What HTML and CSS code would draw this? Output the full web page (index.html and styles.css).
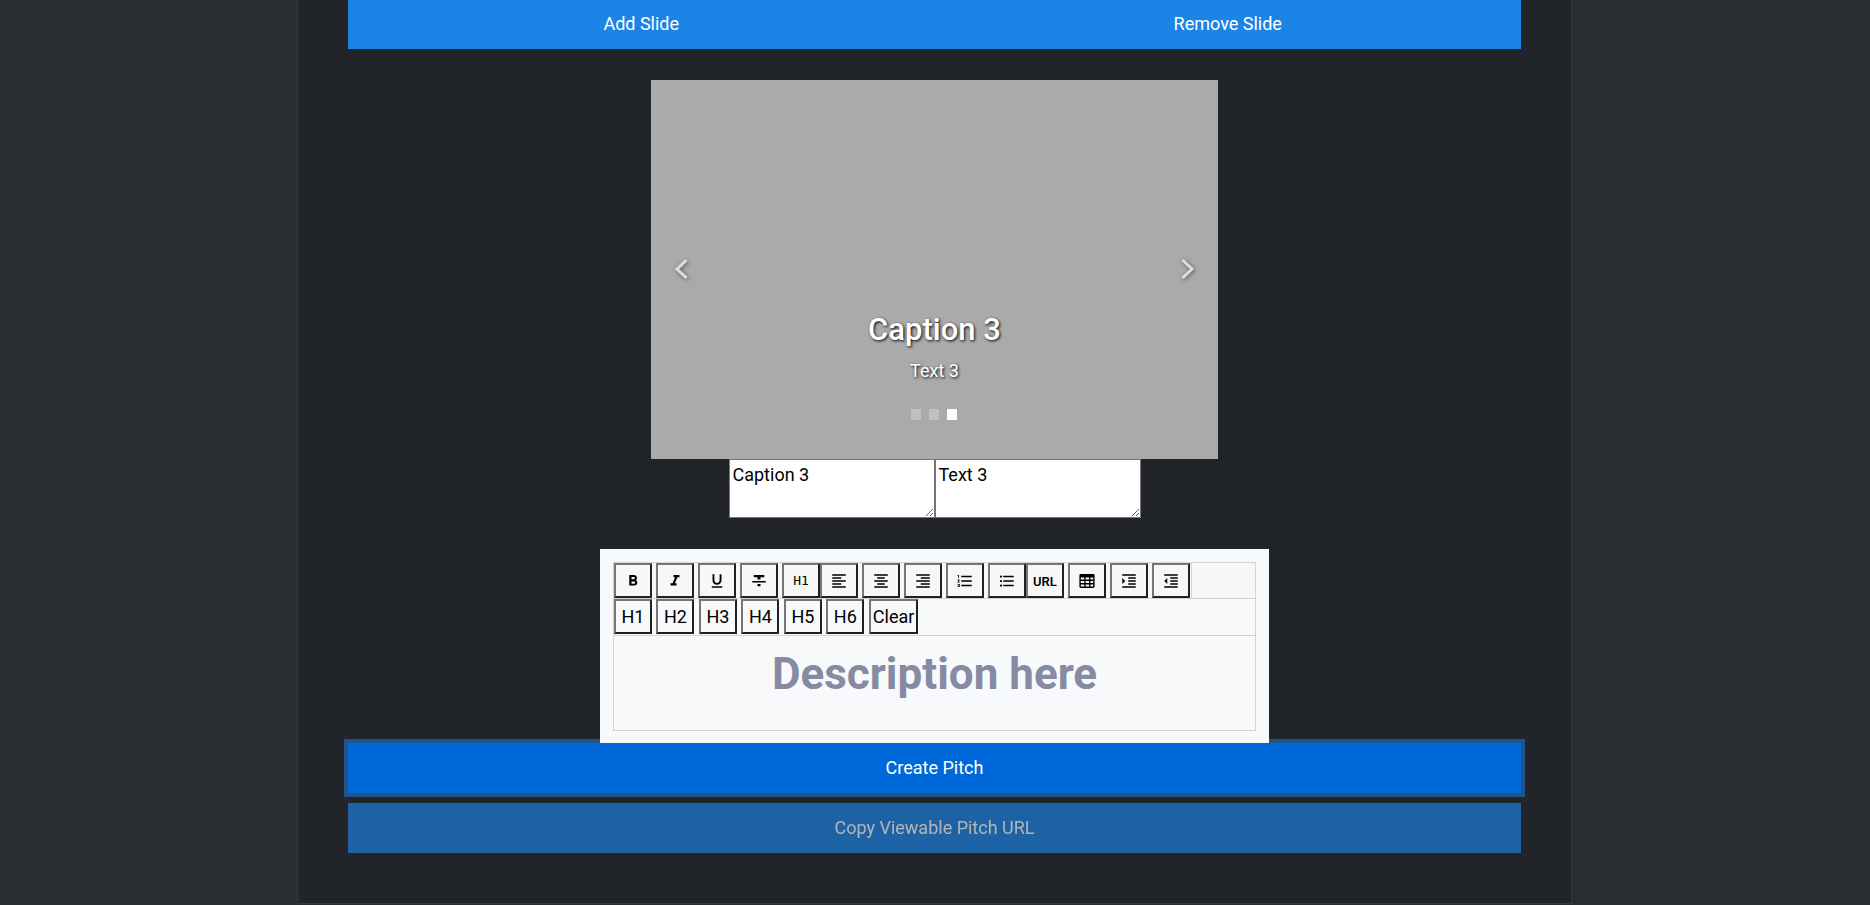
FILE: index.html
```html
<!DOCTYPE html>
<html lang="en">
<head>
<meta charset="utf-8">
<title>Create Pitch</title>
<link rel="stylesheet" href="styles.css">
</head>
<body>
<main class="panel">
  <div class="slide-actions">
    <button class="btn" type="button">Add Slide</button>
    <button class="btn" type="button">Remove Slide</button>
  </div>

  <section class="carousel" aria-label="Slides">
    <button class="arrow" type="button" aria-label="Previous slide">
      <svg viewBox="0 0 20 24" width="20" height="24"><path d="M15.500 2 6 11l9.500 9"/></svg>
    </button>
    <div class="caption">
      <h3 class="caption-title">Caption 3</h3>
      <p class="caption-text">Text 3</p>
      <div class="dots">
        <button class="dot" type="button" aria-label="Slide 1"></button>
        <button class="dot" type="button" aria-label="Slide 2"></button>
        <button class="dot dot-active" type="button" aria-label="Slide 3"></button>
      </div>
    </div>
    <button class="arrow" type="button" aria-label="Next slide">
      <svg viewBox="0 0 20 24" width="20" height="24"><path d="m4.500 2 9.500 9-9.500 9"/></svg>
    </button>
  </section>

  <div class="slide-fields">
    <textarea class="field" aria-label="Slide caption">Caption 3</textarea>
    <textarea class="field" aria-label="Slide text">Text 3</textarea>
  </div>

  <section class="editor" aria-label="Description editor">
    <div class="editor-frame">
      <div class="toolbar">
        <div class="tools">
          <button class="tool" type="button" aria-label="Bold"><svg viewBox="0 0 24 24"><path d="M15.600 10.790c.97-.67 1.650-1.770 1.650-2.790 0-2.260-1.750-4-4-4H7v14h7.040c2.090 0 3.710-1.700 3.710-3.790 0-1.520-.86-2.820-2.150-3.420zM10 6.500h3c.83 0 1.500.67 1.500 1.500s-.67 1.500-1.500 1.500h-3v-3zm3.500 9H10v-3h3.500c.83 0 1.500.67 1.500 1.500s-.67 1.500-1.500 1.500z"/></svg></button>
          <button class="tool" type="button" aria-label="Italic"><svg viewBox="0 0 24 24"><path d="M10 4v3h2.210l-3.420 8H6v3h8v-3h-2.210l3.420-8H18V4z"/></svg></button>
          <button class="tool" type="button" aria-label="Underline"><svg viewBox="0 0 24 24"><path d="M12 17c3.310 0 6-2.690 6-6V3h-2.500v8c0 1.930-1.570 3.500-3.500 3.500S8.500 12.930 8.500 11V3H6v8c0 3.310 2.690 6 6 6zm-7 2v2h14v-2H5z"/></svg></button>
          <button class="tool" type="button" aria-label="Strikethrough"><svg viewBox="0 0 24 24"><path d="M10 19h4v-3h-4v3zM5 4v3h5v3h4V7h5V4H5zM3 14h18v-2H3v2z"/></svg></button>
          <button class="tool tool-h1" type="button">H1</button>
          <button class="tool" type="button" aria-label="Align left"><svg viewBox="0 0 24 24"><path d="M15 15H3v2h12v-2zm0-8H3v2h12V7zM3 13h18v-2H3v2zm0 8h18v-2H3v2zM3 3v2h18V3H3z"/></svg></button>
          <button class="tool" type="button" aria-label="Align center"><svg viewBox="0 0 24 24"><path d="M7 15v2h10v-2H7zm-4 6h18v-2H3v2zm0-8h18v-2H3v2zm4-6v2h10V7H7zM3 3v2h18V3H3z"/></svg></button>
          <button class="tool" type="button" aria-label="Align right"><svg viewBox="0 0 24 24"><path d="M3 21h18v-2H3v2zm6-4h12v-2H9v2zm-6-4h18v-2H3v2zm6-4h12V7H9v2zM3 3v2h18V3H3z"/></svg></button>
          <button class="tool" type="button" aria-label="Numbered list"><svg viewBox="0 0 24 24"><path d="M2 17h2v.5H3v1h1v.5H2v1h3v-4H2v1zm1-9h1V4H2v1h1v3zm-1 3h1.800L2 13.100v.9h3v-1H3.200L5 10.900V10H2v1zm5-6v2h14V5H7zm0 14h14v-2H7v2zm0-6h14v-2H7v2z"/></svg></button>
          <button class="tool" type="button" aria-label="Bulleted list"><svg viewBox="0 0 24 24"><path d="M4 10.500a1.500 1.500 0 1 0 0 3 1.500 1.500 0 0 0 0-3zm0-6a1.500 1.500 0 1 0 0 3 1.500 1.500 0 0 0 0-3zm0 12a1.500 1.500 0 1 0 0 3 1.500 1.500 0 0 0 0-3zM7 19h14v-2H7v2zm0-6h14v-2H7v2zm0-8v2h14V5H7z"/></svg></button>
          <button class="tool tool-url" type="button">URL</button>
          <button class="tool" type="button" aria-label="Table"><svg viewBox="-1 -1 26 26"><path fill-rule="evenodd" d="M3 2h18a2 2 0 0 1 2 2v16a2 2 0 0 1-2 2H3a2 2 0 0 1-2-2V4a2 2 0 0 1 2-2zm0 5v3h5V7H3zm7 0v3h5V7h-5zm7 0v3h4V7h-4zM3 12v3h5v-3H3zm7 0v3h5v-3h-5zm7 0v3h4v-3h-4zM3 17v3h5v-3H3zm7 0v3h5v-3h-5zm7 0v3h4v-3h-4z"/></svg></button>
          <button class="tool" type="button" aria-label="Indent"><svg viewBox="0 0 24 24"><path d="M3 21h18v-2H3v2zM3 8v8l4-4-4-4zm8 9h10v-2H11v2zM3 3v2h18V3H3zm8 6h10V7H11v2zm0 4h10v-2H11v2z"/></svg></button>
          <button class="tool" type="button" aria-label="Outdent"><svg viewBox="0 0 24 24"><path d="M11 17h10v-2H11v2zm-8-5 4 4V8l-4 4zm0 9h18v-2H3v2zM3 3v2h18V3H3zm8 6h10V7H11v2zm0 4h10v-2H11v2z"/></svg></button>
        </div>
      </div>
      <div class="headings">
        <button class="heading-btn" type="button">H1</button>
        <button class="heading-btn" type="button">H2</button>
        <button class="heading-btn" type="button">H3</button>
        <button class="heading-btn" type="button">H4</button>
        <button class="heading-btn" type="button">H5</button>
        <button class="heading-btn" type="button">H6</button>
        <button class="heading-btn" type="button">Clear</button>
      </div>
      <div class="content" contenteditable="true" role="textbox" aria-label="Description">
        <h1 class="description">Description here</h1>
      </div>
    </div>
  </section>

  <div class="submit">
    <button class="btn btn-focused" type="button">Create Pitch</button>
    <button class="btn" type="button" disabled>Copy Viewable Pitch URL</button>
  </div>
</main>
</body>
</html>
```
FILE: styles.css
```css
* {
  box-sizing: border-box;
}

body {
  margin: 0;
  background: #282d30;
  color: #000;
  font: 400 18px/26px Roboto, "Liberation Sans", sans-serif;
}

button,
textarea {
  font: inherit;
}

.panel {
  display: flex;
  flex-direction: column;
  align-items: center;
  margin: 0 298px 0 297px;
  padding: 0 50px 50px;
  border: 1px solid #343a40;
  border-top: 0;
  background: #212529;
}

.slide-actions {
  display: flex;
  width: 100%;
  margin-bottom: 31px;
}

.btn {
  flex: 1;
  padding: 11px 16px;
  border: 0;
  border-radius: 0;
  background: #1b84e7;
  color: #fff;
  line-height: 28px;
}

.slide-actions .btn {
  padding: 10px 16px 11px;
}

.btn:disabled {
  opacity: 0.65;
}

.btn-focused {
  background: #0069d9;
  box-shadow: 0 0 0 4px rgba(27, 132, 231, 0.5);
}

.carousel {
  display: flex;
  justify-content: space-between;
  align-items: center;
  width: 567px;
  max-width: 100%;
  height: 379px;
  padding: 0 20px;
  background: #aaa;
}

.arrow {
  display: flex;
  padding: 0;
  border: 0;
  background: none;
}

.arrow svg {
  fill: none;
  stroke: #dedede;
  stroke-width: 3;
  filter: drop-shadow(1px 1px 2px rgba(0, 0, 0, 0.5));
}

.caption {
  align-self: flex-end;
  padding-bottom: 39px;
  color: #fff;
  text-align: center;
  text-shadow: 1px 1px 3px #000;
}

.caption-title {
  margin: 0 0 9px;
  font-size: 31px;
  font-weight: 500;
  line-height: 38px;
}

.caption-text {
  margin: 0 0 25px;
}

.dots {
  display: flex;
  justify-content: center;
  gap: 8px;
}

.dot {
  width: 10px;
  height: 11px;
  padding: 0;
  border: 0;
  background: #c0c0c0;
}

.dot-active {
  background: #fff;
}

.slide-fields {
  display: flex;
  margin-bottom: 31px;
}

.field {
  width: 206px;
  height: 59px;
  padding: 2px 3px;
  border: 1px solid #767676;
  border-radius: 0;
  background: #fff;
  color: #000;
}

.editor {
  position: relative;
  z-index: 1;
  width: 669px;
  max-width: 100%;
  padding: 13px 13px 12px;
  background: #f8f9fa;
}

.editor-frame {
  border: 1px solid #d3d3d3;
}

.toolbar {
  display: flex;
  border-bottom: 1px solid #d3d3d3;
  background: #f7f7f7;
}

.tools {
  display: flex;
  gap: 4px;
  padding-right: 1px;
  border-right: 1px solid #d3d3d3;
}

.tool,
.heading-btn {
  min-width: 38px;
  height: 35px;
  padding: 0 2px;
  border: 2px solid;
  border-color: #767676 #212121 #212121 #767676;
  border-radius: 0;
  background: none;
  color: #000;
}

.tool {
  display: flex;
  justify-content: center;
  align-items: center;
}

/* Each of these starts a new group, flush with the button before it. */
.tool:nth-child(5n + 6) {
  margin-left: -4px;
}

.tool svg {
  width: 18px;
  height: 18px;
  fill: #000;
}

.tool-h1 {
  font-family: "DejaVu Sans Mono", monospace;
  font-size: 13px;
}

.tool-url {
  padding-top: 3px;
  font-size: 13px;
  font-weight: 600;
}

.headings {
  height: 37px;
  border-bottom: 1px solid #d3d3d3;
}

.content {
  min-height: 94px;
  padding: 11px;
  outline: 0;
}

.description {
  margin: 0;
  color: #868aa3;
  font-size: 44px;
  font-weight: 700;
  line-height: 54px;
  text-align: center;
}

.submit {
  display: flex;
  flex-direction: column;
  gap: 10px;
  width: 100%;
}
```
